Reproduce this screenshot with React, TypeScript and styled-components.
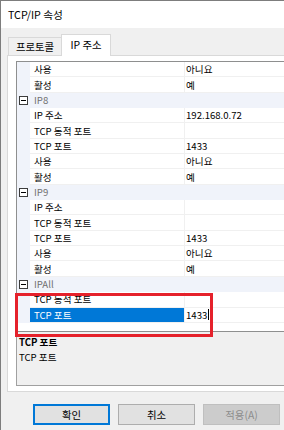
import React from "react";
import styled, { createGlobalStyle } from "styled-components";

type Item =
  | { kind: "cat"; label: string }
  | { kind: "prop"; name: string; value: string; selected?: boolean };

const items: Item[] = [
  { kind: "prop", name: "사용", value: "아니요" },
  { kind: "prop", name: "활성", value: "예" },
  { kind: "cat", label: "IP8" },
  { kind: "prop", name: "IP 주소", value: "192.168.0.72" },
  { kind: "prop", name: "TCP 동적 포트", value: "" },
  { kind: "prop", name: "TCP 포트", value: "1433" },
  { kind: "prop", name: "사용", value: "아니요" },
  { kind: "prop", name: "활성", value: "예" },
  { kind: "cat", label: "IP9" },
  { kind: "prop", name: "IP 주소", value: "" },
  { kind: "prop", name: "TCP 동적 포트", value: "" },
  { kind: "prop", name: "TCP 포트", value: "1433" },
  { kind: "prop", name: "사용", value: "아니요" },
  { kind: "prop", name: "활성", value: "예" },
  { kind: "cat", label: "IPAll" },
  { kind: "prop", name: "TCP 동적 포트", value: "" },
  { kind: "prop", name: "TCP 포트", value: "1433", selected: true },
];

export default function App() {
  return (
    <>
      <GlobalStyle />
      <Window>
        <TitleBar>TCP/IP 속성</TitleBar>
        <Body>
          <TabStrip>
            <Tab>프로토콜</Tab>
            <Tab $active>IP 주소</Tab>
          </TabStrip>
          <TabPanel>
            <Grid>
              {items.map((item, i) =>
                item.kind === "cat" ? (
                  <CategoryRow key={i}>
                    <Gutter>
                      <Toggle />
                    </Gutter>
                    <CategoryLabel>{item.label}</CategoryLabel>
                  </CategoryRow>
                ) : (
                  <Row key={i}>
                    <Gutter />
                    <NameCell $selected={item.selected}>{item.name}</NameCell>
                    <ValueCell>
                      {item.value}
                      {item.selected && <Caret />}
                    </ValueCell>
                  </Row>
                )
              )}
            </Grid>
            <Description>
              <DescTitle>TCP 포트</DescTitle>
              <DescText>TCP 포트</DescText>
            </Description>
          </TabPanel>
          <Footer>
            <Button $default>확인</Button>
            <Button>취소</Button>
            <Button disabled>적용(A)</Button>
          </Footer>
        </Body>
        <Highlight />
      </Window>
    </>
  );
}

const GlobalStyle = createGlobalStyle`
  html, body {
    margin: 0;
    padding: 0;
    background: #f0f0f0;
  }
  body {
    font-family: "Noto Sans CJK KR", "Noto Sans", sans-serif;
    color: #000;
  }
`;

const Window = styled.div`
  position: relative;
  width: 284px;
  height: 430px;
  box-sizing: border-box;
  border-left: 1px solid #7d7d7d;
  border-top: 1px solid #7d7d7d;
  background: #f0f0f0;
  overflow: hidden;
  display: flex;
  flex-direction: column;
`;

const TitleBar = styled.div`
  flex: none;
  height: 27px;
  background: #fff;
  display: flex;
  align-items: center;
  padding-left: 7px;
  font-size: 10.7px;
`;

const Body = styled.div`
  flex: 1;
  padding: 6px 0 0 6px;
  display: flex;
  flex-direction: column;
`;

const TabStrip = styled.div`
  flex: none;
  height: 21px;
  padding-left: 1px;
  display: flex;
  align-items: flex-end;
  position: relative;
  z-index: 1;
`;

const Tab = styled.div<{ $active?: boolean }>`
  box-sizing: border-box;
  display: flex;
  align-items: center;
  justify-content: center;
  border: 1px solid #d9d9d9;
  border-bottom: none;
  font-size: 10.4px;
  width: ${(p) => (p.$active ? 50 : 54)}px;
  height: ${(p) => (p.$active ? 22 : 18)}px;
  margin-left: ${(p) => (p.$active ? -1 : 0)}px;
  margin-bottom: ${(p) => (p.$active ? -1 : 0)}px;
  padding-bottom: ${(p) => (p.$active ? 2 : 0)}px;
  background: ${(p) => (p.$active ? "#fff" : "#f0f0f0")};
`;

const TabPanel = styled.div`
  flex: none;
  height: 337px;
  box-sizing: border-box;
  border: 1px solid #d9d9d9;
  border-right: none;
  background: #fff;
  padding: 5px 0 5px 8px;
  display: flex;
  flex-direction: column;
`;

const Grid = styled.div`
  flex: none;
  height: 271px;
  box-sizing: border-box;
  border: 1px solid #8e8f8f;
  border-right: none;
  overflow: hidden;
  font-size: 9.6px;
`;

const Row = styled.div`
  display: flex;
  height: 15.35px;
  line-height: 14px;
`;

const CategoryRow = styled(Row)`
  background: #f0f3fa;
`;

const Gutter = styled.div`
  flex: none;
  width: 13px;
  background: #f0f3fa;
  display: flex;
  align-items: center;
  justify-content: center;
`;

const Toggle = styled.span`
  position: relative;
  width: 9px;
  height: 9px;
  box-sizing: border-box;
  border: 1px solid #3c3c3c;
  background: #fff;

  &::after {
    content: "";
    position: absolute;
    left: 1px;
    top: 3px;
    width: 5px;
    height: 1px;
    background: #000;
  }
`;

const CategoryLabel = styled.div`
  padding-left: 4px;
  color: #707070;
  display: flex;
  align-items: center;
`;

const NameCell = styled.div<{ $selected?: boolean }>`
  flex: none;
  width: 155px;
  box-sizing: border-box;
  padding-left: 4px;
  display: flex;
  align-items: center;
  border-right: 1px solid #f0f0f0;
  border-bottom: 1px solid #f0f0f0;
  white-space: nowrap;
  background: ${(p) => (p.$selected ? "#0078d7" : "#fff")};
  color: ${(p) => (p.$selected ? "#fff" : "#000")};
`;

const ValueCell = styled.div`
  flex: 1;
  box-sizing: border-box;
  padding-left: 1px;
  display: flex;
  align-items: center;
  border-bottom: 1px solid #f0f0f0;
  white-space: nowrap;
`;

const Caret = styled.span`
  width: 1px;
  height: 11px;
  margin-left: 1px;
  background: #000;
`;

const Description = styled.div`
  flex: none;
  height: 54px;
  box-sizing: border-box;
  border-left: 1px solid #a0a0a0;
  border-bottom: 1px solid #a0a0a0;
  background: #f0f0f0;
  padding: 3px 0 0 2px;
  font-size: 9.6px;
  line-height: 15px;
`;

const DescTitle = styled.div`
  font-weight: bold;
`;

const DescText = styled.div``;

const Footer = styled.div`
  flex: none;
  display: flex;
  gap: 8px;
  padding: 12px 0 0 26px;
`;

const Button = styled.button<{ $default?: boolean }>`
  width: 77px;
  height: 21px;
  box-sizing: border-box;
  padding: 0;
  font-family: "Noto Sans CJK KR", "Noto Sans", sans-serif;
  font-size: 10.4px;
  color: #000;
  background: #e1e1e1;
  border: ${(p) => (p.$default ? "2px solid #0078d7" : "1px solid #adadad")};

  &:disabled {
    background: #cccccc;
    border-color: #bfbfbf;
    color: #8d8d8d;
  }
`;

const Highlight = styled.div`
  position: absolute;
  left: 14px;
  top: 292px;
  width: 198px;
  height: 44px;
  box-sizing: border-box;
  border: 3px solid #e5212b;
  pointer-events: none;
`;
